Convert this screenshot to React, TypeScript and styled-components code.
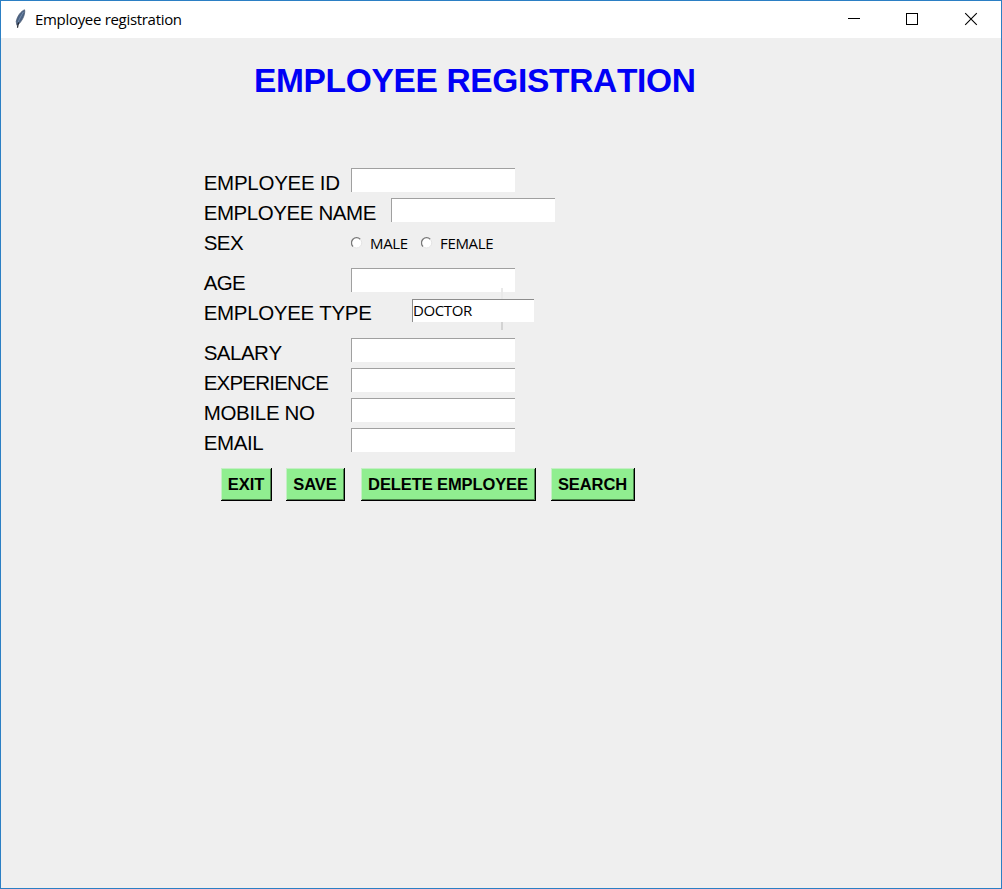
import React from "react";
import styled, { createGlobalStyle } from "styled-components";

const GlobalStyle = createGlobalStyle`
  * { box-sizing: border-box; }
  body { margin: 0; font-kerning: none; }
`;

const Window = styled.div`
  width: 1002px;
  height: 889px;
  display: flex;
  flex-direction: column;
  overflow: hidden;
  background: #efefef;
  border: 1px solid #2b7fc4;
  color: #000;
  font-family: "Liberation Sans", Arial, sans-serif;
`;

const TitleBar = styled.header`
  height: 37px;
  flex: none;
  display: flex;
  align-items: center;
  background: #fff;
  padding: 0 23px 2px 12px;
`;

const Caption = styled.span`
  flex: 1;
  margin-left: 8px;
  font: 15px/20px "Open Sans", "Noto Sans", sans-serif;
  letter-spacing: -0.31px;
`;

const Controls = styled.div`
  display: flex;
  gap: 45px;
`;

const Heading = styled.h1`
  margin: 24px 0 0 253px;
  font-size: 33.5px;
  line-height: 38px;
  font-weight: 700;
  letter-spacing: -0.33px;
  color: #0000f6;
  white-space: nowrap;
`;

const Form = styled.form`
  margin: 68px 0 0 202px;
  display: flex;
  flex-direction: column;
`;

const Row = styled.div<{ $height?: number }>`
  height: ${(p) => p.$height ?? 30}px;
  display: flex;
  align-items: flex-start;
`;

const Label = styled.label<{ $width?: number; $tracking?: number }>`
  width: ${(p) => p.$width ?? 148}px;
  flex: none;
  padding: 3px 0 0 0.7px;
  font-size: 20.5px;
  line-height: 24px;
  letter-spacing: ${(p) => p.$tracking ?? -0.38}px;
  white-space: nowrap;
`;

const Field = styled.input`
  width: 164px;
  height: 24px;
  padding: 0;
  border: 0 solid #a0a0a0;
  border-width: 1px 0 0 1px;
  border-radius: 0;
  background: #fff;
  outline: none;
`;

const TypeArea = styled.div`
  position: relative;
  height: 25px;
  padding-top: 1px;
`;

const Scroller = styled.span`
  position: absolute;
  left: 89px;
  top: -10px;
  width: 2px;
  height: 42px;
  background: linear-gradient(#e9e9e9 0 12px, #d3d3d3 12px);
`;

const TypeBox = styled.div`
  position: relative;
  width: 122px;
  height: 23px;
  border: 0 solid #8c8c8c;
  border-width: 1px 0 0 1px;
  background: #fff;
  font: 15px/21px "Open Sans", "Noto Sans", sans-serif;
  letter-spacing: -0.4px;
`;

const Choice = styled.label<{ $width: number }>`
  display: flex;
  align-items: center;
  width: ${(p) => p.$width}px;
  height: 30px;
  gap: 7px;
  font: 15px/20px "Open Sans", "Noto Sans", sans-serif;
  letter-spacing: -0.35px;
`;

const Buttons = styled.div`
  display: flex;
  margin: 10px 0 0 18px;
`;

const Button = styled.button<{ $width: number; $gap?: number }>`
  width: ${(p) => p.$width}px;
  height: 33px;
  margin: 0 ${(p) => p.$gap ?? 0}px 0 0;
  padding: 1px 0 0;
  border: 0 solid #000;
  border-width: 0 1px 1px 0;
  background: #90ee90;
  box-shadow: inset 1px 1px #c5efc5, inset -1px -1px #4c864c;
  color: #000;
  font: 700 16.5px/19px "Liberation Sans", Arial, sans-serif;
  letter-spacing: -0.1px;
  white-space: nowrap;
`;

const Feather = () => (
  <svg width="14" height="20" viewBox="0 0 14 20">
    <path d="M11.6 .8C8 2 4 7.5 3.2 12.6L3.9 16.2 6.4 14.4C10 10.5 12.4 4.6 11.6 .8Z" fill="#4b6384" stroke="#43536c" strokeWidth=".7" />
    <path d="M10.4 3C8.5 6 6.3 10 5 13.5" fill="none" stroke="#8095b3" strokeWidth=".8" />
    <path d="M5.6 13.5C5 15.5 4.7 17 4.5 18.8" fill="none" stroke="#20242c" strokeWidth="1.2" />
  </svg>
);

const RadioDot = () => (
  <svg width="12" height="12" viewBox="0 0 12 12">
    <circle cx="5.7" cy="6" r="5.2" fill="#fff" />
    <path d="M2 9.5A5 5 0 0 1 9.2 2.2" fill="none" stroke="#777" strokeWidth="1.3" />
    <path d="M2 9.5A5 5 0 0 0 9.2 2.2" fill="none" stroke="#dcdcdc" strokeWidth=".8" />
  </svg>
);

const Entry = ({ label, width, tracking }: { label: string; width?: number; tracking?: number }) => (
  <Row>
    <Label $width={width} $tracking={tracking}>{label}</Label>
    <Field aria-label={label} />
  </Row>
);

export default function App() {
  return (
    <>
      <GlobalStyle />
      <Window>
        <TitleBar>
          <Feather />
          <Caption>Employee registration</Caption>
          <Controls>
            <svg width="14" height="14" viewBox="0 0 14 14" shapeRendering="crispEdges">
              <path d="M2 6.5H14" stroke="#000" />
            </svg>
            <svg width="14" height="14" viewBox="0 0 14 14" shapeRendering="crispEdges">
              <path d="M1.5 1.5H12.5V12.5H1.5Z" fill="none" stroke="#000" />
            </svg>
            <svg width="14" height="14" viewBox="0 0 14 14">
              <path d="M1.2 1.2L12.8 12.8M12.8 1.2L1.2 12.8" stroke="#000" strokeWidth="1.1" />
            </svg>
          </Controls>
        </TitleBar>
        <Heading>EMPLOYEE REGISTRATION</Heading>
        <Form onSubmit={(e) => e.preventDefault()}>
          <Entry label="EMPLOYEE ID" tracking={-0.26} />
          <Entry label="EMPLOYEE NAME" width={188} tracking={-0.42} />
          <Row $height={40}>
            <Label $tracking={-0.5}>SEX</Label>
            <Choice $width={70}><RadioDot />MALE</Choice>
            <Choice $width={80}><RadioDot />FEMALE</Choice>
          </Row>
          <Entry label="AGE" tracking={-0.6} />
          <Row $height={40}>
            <Label $width={209} $tracking={-0.32}>EMPLOYEE TYPE</Label>
            <TypeArea>
              <Scroller />
              <TypeBox>DOCTOR</TypeBox>
            </TypeArea>
          </Row>
          <Entry label="SALARY" tracking={-0.5} />
          <Entry label="EXPERIENCE" tracking={-0.78} />
          <Entry label="MOBILE NO" tracking={-0.32} />
          <Entry label="EMAIL" />
          <Buttons>
            <Button $width={51} $gap={14}>EXIT</Button>
            <Button $width={59} $gap={16}>SAVE</Button>
            <Button $width={175} $gap={15}>DELETE EMPLOYEE</Button>
            <Button $width={84}>SEARCH</Button>
          </Buttons>
        </Form>
      </Window>
    </>
  );
}
